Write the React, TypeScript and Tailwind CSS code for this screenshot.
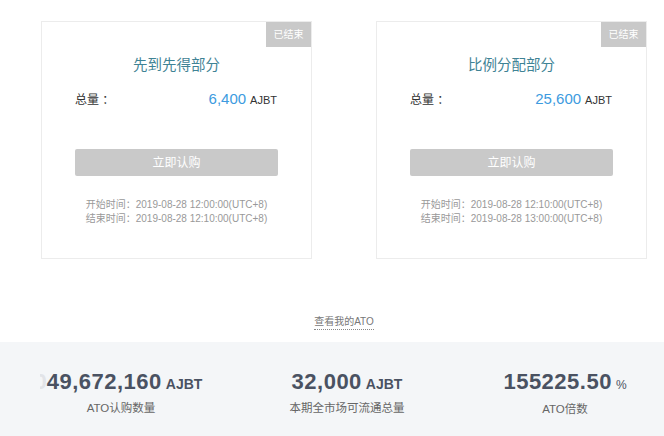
import React from 'react';

interface Sale {
  title: string;
  total: string;
  start: string;
  end: string;
}

const sales: Sale[] = [
  {
    title: '先到先得部分',
    total: '6,400',
    start: '2019-08-28 12:00:00(UTC+8)',
    end: '2019-08-28 12:10:00(UTC+8)',
  },
  {
    title: '比例分配部分',
    total: '25,600',
    start: '2019-08-28 12:10:00(UTC+8)',
    end: '2019-08-28 13:00:00(UTC+8)',
  },
];

const SaleCard: React.FC<{ sale: Sale }> = ({ sale }) => (
  <div className="relative w-[271px] h-[238px] border border-[#ececec] bg-white px-[33px] pt-[31px]">
    <span className="absolute top-0 right-0 w-[45px] h-[25px] flex items-center justify-center bg-[#c9c9c9] text-white text-[10px]">
      已结束
    </span>
    <h3 className="text-center text-[14.5px] leading-[24px] text-[#3f8395]">{sale.title}</h3>
    <div className="mt-[10px] flex items-baseline justify-between">
      <span className="text-[12px] text-[#333]">总量 ：</span>
      <span className="pr-[1px]">
        <span className="text-[15px] text-[#3d9be0]">{sale.total}</span>
        <span className="ml-[4px] text-[11px] text-[#333]">AJBT</span>
      </span>
    </div>
    <button className="mt-[38px] w-full h-[27px] bg-[#c9c9c9] rounded-[2px] text-white text-[12px]">
      立即认购
    </button>
    <div className="mt-[22px] text-center text-[10px] leading-[14px] text-[#999]">
      <p>开始时间：{sale.start}</p>
      <p>结束时间：{sale.end}</p>
    </div>
  </div>
);

const App: React.FC = () => {
  return (
    <div
      className="w-[664px] h-[436px] overflow-hidden bg-white"
      style={{ fontFamily: '"Liberation Sans", "Noto Sans CJK SC", sans-serif' }}
    >
      <div className="flex gap-[64px] pl-[41px] pt-[21px]">
        {sales.map((sale) => (
          <SaleCard key={sale.title} sale={sale} />
        ))}
      </div>

      <div className="h-[83px] flex items-end justify-center pb-[12px] pl-[24px]">
        <a className="text-[10px] leading-[14px] text-[#777] border-b border-dotted border-[#888]">
          查看我的ATO
        </a>
      </div>

      <div className="h-[95px] bg-[#f4f6f8] flex overflow-hidden pt-[27px]">
        <div className="w-[242px] shrink-0 flex flex-col items-center">
          <div className="flex items-baseline text-[#4a5262] font-bold leading-[26px]">
            <span className="inline-flex w-[7px] justify-end overflow-hidden text-[22px] text-[#e2e4e8]">0</span>
            <span className="text-[22px] tracking-[0.5px]">49,672,160</span>
            <span className="ml-[4px] text-[14px]">AJBT</span>
          </div>
          <span className="mt-[3px] text-[11.5px] leading-[16px] text-[#666]">ATO认购数量</span>
        </div>
        <div className="w-[210px] shrink-0 flex flex-col items-center">
          <div className="flex items-baseline text-[#4a5262] font-bold leading-[26px]">
            <span className="text-[22px] tracking-[0.5px]">32,000</span>
            <span className="ml-[4px] text-[14px]">AJBT</span>
          </div>
          <span className="mt-[3px] text-[11.5px] leading-[16px] text-[#666]">本期全市场可流通总量</span>
        </div>
        <div className="w-[226px] shrink-0 flex flex-col items-center">
          <div className="flex items-baseline text-[#4a5262] leading-[26px]">
            <span className="text-[22px] font-bold tracking-[0.5px]">155225.50</span>
            <span className="ml-[4px] text-[12px]">%</span>
          </div>
          <span className="mt-[3px] text-[11.5px] leading-[16px] text-[#666]">ATO倍数</span>
        </div>
      </div>
    </div>
  );
};

export default App;
